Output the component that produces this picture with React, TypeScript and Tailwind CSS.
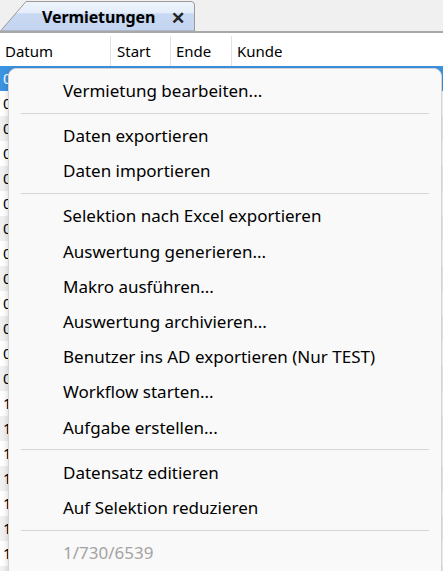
import React from 'react';

type MenuEntry = { label: string; disabled?: boolean } | 'sep';

const menuEntries: MenuEntry[] = [
  { label: 'Vermietung bearbeiten...' },
  'sep',
  { label: 'Daten exportieren' },
  { label: 'Daten importieren' },
  'sep',
  { label: 'Selektion nach Excel exportieren' },
  { label: 'Auswertung generieren...' },
  { label: 'Makro ausführen...' },
  { label: 'Auswertung archivieren...' },
  { label: 'Benutzer ins AD exportieren (Nur TEST)' },
  { label: 'Workflow starten...' },
  { label: 'Aufgabe erstellen...' },
  'sep',
  { label: 'Datensatz editieren' },
  { label: 'Auf Selektion reduzieren' },
  'sep',
  { label: '1/730/6539', disabled: true },
];

const rows = [
  '02.01.2023', '03.01.2023', '04.01.2023', '05.01.2023', '06.01.2023', '07.01.2023',
  '08.01.2023', '09.01.2023', '09.02.2023', '09.03.2023', '09.04.2023', '09.05.2023',
  '09.06.2023', '10.01.2023', '11.01.2023', '12.01.2023', '13.01.2023', '14.01.2023',
  '15.01.2023', '16.01.2023', '17.01.2023',
];

const font = { fontFamily: '"Segoe UI", "Noto Sans", "Liberation Sans", sans-serif' };

const TabBar: React.FC = () => (
  <div className="h-[31px] bg-[#f0f0f0] flex items-end">
    <div className="relative h-[30px] w-[195px]">
      <svg className="absolute inset-0" width="195" height="30" viewBox="0 0 195 30">
        <defs>
          <linearGradient id="tabFill" x1="0" y1="0" x2="0" y2="1">
            <stop offset="0" stopColor="#eef4fc" />
            <stop offset="0.4" stopColor="#e3edfa" />
            <stop offset="0.41" stopColor="#c8d8f2" />
            <stop offset="1" stopColor="#c4d5f1" />
          </linearGradient>
        </defs>
        <path d="M0.5 30 L26 0.5 H191 Q194.5 0.5 194.5 4 V30 Z" fill="url(#tabFill)" stroke="#9a9a9a" />
      </svg>
      <div className="relative flex items-center h-full pl-[42px] pt-[2px]">
        <span className="text-[16px] font-bold text-black tracking-[-0.1px]">Vermietungen</span>
        <span className="ml-[16px] text-[17px] font-bold text-[#222] leading-none">✕</span>
      </div>
    </div>
  </div>
);

const Header: React.FC = () => (
  <div className="border-t-2 border-[#a8a8a8] bg-white h-[35px] flex text-[15px] text-black pt-[3px]">
    <div className="w-[111px] pl-[5px] flex items-center border-r border-[#e3e3e3]">Datum</div>
    <div className="w-[60px] pl-[6px] flex items-center border-r border-[#e3e3e3]">Start</div>
    <div className="w-[61px] pl-[5px] flex items-center border-r border-[#e3e3e3]">Ende</div>
    <div className="flex-1 pl-[5px] flex items-center">Kunde</div>
  </div>
);

const Grid: React.FC = () => (
  <div className="text-[15px]">
    {rows.map((d, i) => (
      <div
        key={d}
        className={`h-[25px] flex items-center pl-[3px] ${
          i === 0 ? 'bg-[#3c93e0] text-white' : i % 2 === 0 ? 'bg-[#f0f0f0] text-black' : 'bg-white text-black'
        }`}
      >
        {d}
      </div>
    ))}
  </div>
);

const ContextMenu: React.FC = () => (
  <div className="absolute left-[8px] top-[68px] w-[434px] h-[520px] bg-[#f9f9f9] border border-[#d4d4d4] rounded-[8px] shadow-[0_2px_6px_rgba(0,0,0,0.18)] pt-[4px]">
    {menuEntries.map((e, i) =>
      e === 'sep' ? (
        <div key={i} className="h-[10px] flex items-center px-[12px]">
          <div className="h-px w-[411px] bg-[#d6d6d6]" />
        </div>
      ) : (
        <div
          key={i}
          className={`h-[35.2px] flex items-center pl-[54px] text-[17px] ${
            e.disabled ? 'text-[#a3a3a3]' : 'text-black'
          }`}
        >
          {e.label}
        </div>
      )
    )}
  </div>
);

export default function App() {
  return (
    <div className="relative w-[443px] h-[571px] overflow-hidden bg-white" style={font}>
      <TabBar />
      <Header />
      <Grid />
      <ContextMenu />
    </div>
  );
}
